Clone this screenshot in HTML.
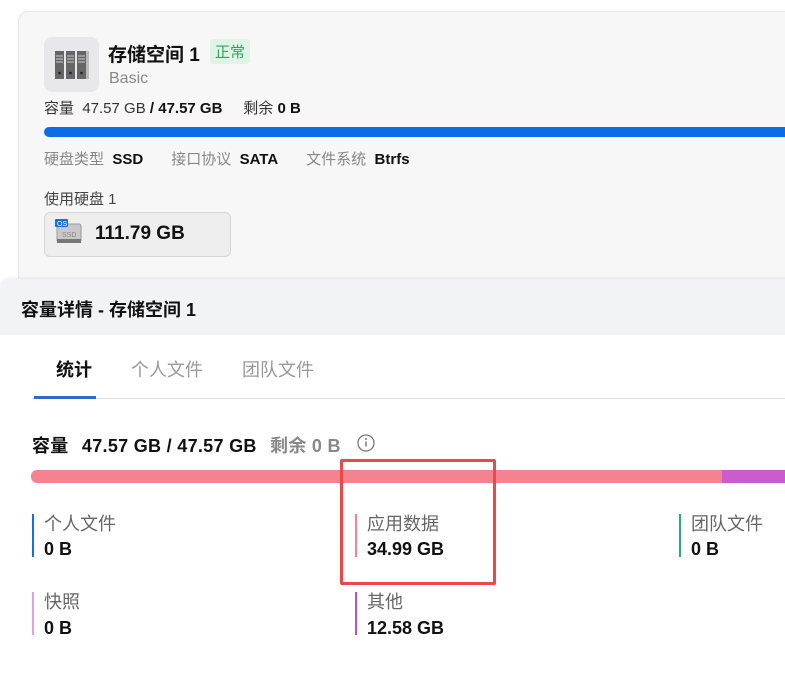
<!DOCTYPE html>
<html><head><meta charset="utf-8"><style>
body{margin:0;width:785px;height:679px;overflow:hidden;background:#fff;font-family:"Liberation Sans","Noto Sans CJK SC",sans-serif;position:relative;color:#111}
.a{position:absolute;white-space:nowrap}
.card{position:absolute;left:18px;top:11px;width:780px;height:275px;background:#f7f7f8;border:1px solid #e6e6e8;border-radius:10px}
.panel{position:absolute;left:0;top:279px;width:800px;height:420px;background:#fff;border-radius:10px 0 0 0;overflow:hidden;box-shadow:0 -1px 3px rgba(0,0,0,.08)}
.g{color:#888}
.b{font-weight:bold}
</style></head><body>
<div class="card"></div>
<div class="a" style="left:44px;top:37px;width:55px;height:55px;background:#e8e8ea;border-radius:8px"></div>
<svg class="a" style="left:53px;top:47px" width="36" height="34"><g fill="#666"><rect x="2" y="4" width="9" height="28"/><rect x="13" y="4" width="9" height="28"/><rect x="24" y="4" width="9" height="28"/></g><rect x="33" y="4" width="3" height="28" fill="#bbb"/><g stroke="#ccc" stroke-width="1"><path d="M3 9h7M3 12h7M3 15h7M14 9h7M14 12h7M14 15h7M25 9h7M25 12h7M25 15h7"/></g><g fill="#222"><circle cx="6.5" cy="26" r="1.3"/><circle cx="17.5" cy="26" r="1.3"/><circle cx="28.5" cy="26" r="1.3"/></g></svg>
<div class="a b" style="left:108px;top:40px;font-size:19px">存储空间 1</div>
<div class="a" style="left:210px;top:39px;background:#dff3e6;color:#2aa860;font-size:15px;padding:2px 5px;border-radius:3px">正常</div>
<div class="a g" style="left:109px;top:70px;font-size:16px">Basic</div>
<div class="a" style="left:44px;top:97px;font-size:15px;color:#333">容量&nbsp; 47.57 GB <b style="color:#111">/ 47.57 GB</b>&nbsp;&nbsp;&nbsp;&nbsp; 剩余 <b style="color:#111">0 B</b></div>
<div class="a" style="left:44px;top:127px;width:760px;height:10px;background:#0a6de6;border-radius:5px"></div>
<div class="a" style="left:44px;top:148px;font-size:15px"><span class="g">硬盘类型</span>&nbsp; <b>SSD</b><span style="display:inline-block;width:28px"></span><span class="g">接口协议</span>&nbsp; <b>SATA</b><span style="display:inline-block;width:28px"></span><span class="g">文件系统</span>&nbsp; <b>Btrfs</b></div>
<div class="a" style="left:44px;top:188px;font-size:15px;color:#444">使用硬盘 1</div>
<div class="a" style="left:44px;top:212px;width:185px;height:43px;background:#eeeeef;border:1px solid #d6d6d8;border-radius:6px"></div>
<svg class="a" style="left:54px;top:218px" width="30" height="30"><rect x="3" y="6" width="24" height="18" rx="2" fill="#c8c8c8" stroke="#999"/><rect x="3" y="21" width="24" height="4" fill="#777"/><text x="8" y="19" font-size="7" fill="#888" font-family="Liberation Sans">SSD</text><rect x="1" y="1" width="13" height="8" rx="1" fill="#1a6fe0"/><text x="3" y="8" font-size="7" fill="#fff" font-family="Liberation Sans">OS</text></svg>
<div class="a b" style="left:95px;top:223px;font-size:19px">111.79 GB</div>

<div class="panel">
<div style="position:absolute;left:0;top:0;width:800px;height:56px;background:#f2f3f5"></div>
</div>
<div class="a b" style="left:21px;top:296px;font-size:18px">容量详情 - 存储空间 1</div>
<div class="a b" style="left:56px;top:356px;font-size:18px">统计</div>
<div class="a g" style="left:131px;top:356px;font-size:18px;color:#999">个人文件</div>
<div class="a g" style="left:242px;top:356px;font-size:18px;color:#999">团队文件</div>
<div class="a" style="left:32px;top:398px;width:760px;height:1px;background:#ddd"></div>
<div class="a" style="left:34px;top:396px;width:62px;height:3px;background:#2a6dc9"></div>
<div class="a b" style="left:32px;top:432px;font-size:18px;letter-spacing:0.3px">容量 <span style="margin-left:8px">47.57 GB / 47.57 GB</span> <span style="color:#888;margin-left:8px">剩余 0 B</span></div>
<svg class="a" style="left:357px;top:434px" width="18" height="18"><circle cx="9" cy="9" r="8" fill="none" stroke="#777" stroke-width="1.3"/><path d="M9 7.5v5" stroke="#777" stroke-width="1.5"/><circle cx="9" cy="5" r="1" fill="#777"/></svg>
<div class="a" style="left:31px;top:470px;width:770px;height:13px;background:#f4838f;border-radius:6px"></div>
<div class="a" style="left:722px;top:470px;width:70px;height:13px;background:#cc5ccc"></div>
<div class="a" style="left:340px;top:459px;width:150px;height:120px;border:3px solid #e84a4a;border-radius:2px"></div>

<div class="a" style="left:32px;top:514px;width:2px;height:43px;background:#1a6fe0"></div>
<div class="a" style="left:44px;top:510px;font-size:18px;color:#666">个人文件</div>
<div class="a b" style="left:44px;top:539px;font-size:18px">0 B</div>
<div class="a" style="left:355px;top:514px;width:2px;height:43px;background:#f4838f"></div>
<div class="a" style="left:367px;top:510px;font-size:18px;color:#666">应用数据</div>
<div class="a b" style="left:367px;top:539px;font-size:18px">34.99 GB</div>
<div class="a" style="left:679px;top:514px;width:2px;height:43px;background:#2aa890"></div>
<div class="a" style="left:691px;top:510px;font-size:18px;color:#666">团队文件</div>
<div class="a b" style="left:691px;top:539px;font-size:18px">0 B</div>
<div class="a" style="left:32px;top:592px;width:2px;height:43px;background:#e0a0e0"></div>
<div class="a" style="left:44px;top:588px;font-size:18px;color:#666">快照</div>
<div class="a b" style="left:44px;top:618px;font-size:18px">0 B</div>
<div class="a" style="left:355px;top:592px;width:2px;height:43px;background:#c050c0"></div>
<div class="a" style="left:367px;top:588px;font-size:18px;color:#666">其他</div>
<div class="a b" style="left:367px;top:618px;font-size:18px">12.58 GB</div>
</body></html>
